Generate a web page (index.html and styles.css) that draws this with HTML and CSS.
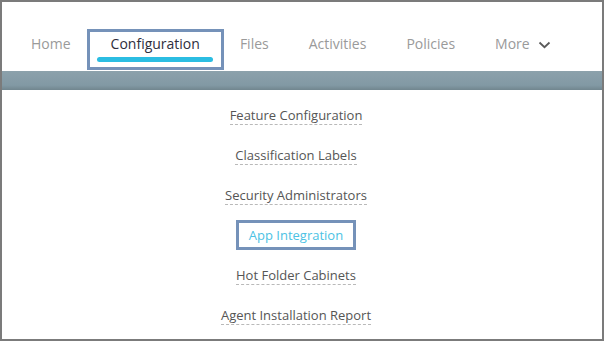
FILE: index.html
```html
<!DOCTYPE html>
<html>

<head>
    <title>Configuration</title>
    <link rel="stylesheet" href="styles.css">
</head>

<body>
    <div class="frame">
        <nav class="tabs">
            <a href="#" class="tab">Home</a>
            <a href="#" class="tab active">Configuration</a>
            <a href="#" class="tab">Files</a>
            <a href="#" class="tab">Activities</a>
            <a href="#" class="tab">Policies</a>
            <a href="#" class="tab more">More
                <svg width="13" height="8" viewBox="0 0 13 8">
                    <path d="M1.5 1.5 L6.5 6.2 L11.5 1.5" fill="none" stroke="#5a5a5a" stroke-width="1.8"/>
                </svg>
            </a>
        </nav>
        <div class="bar"></div>
        <ul class="menu">
            <li><a href="#">Feature Configuration</a></li>
            <li><a href="#">Classification Labels</a></li>
            <li><a href="#">Security Administrators</a></li>
            <li><a href="#" class="current">App Integration</a></li>
            <li><a href="#">Hot Folder Cabinets</a></li>
            <li><a href="#">Agent Installation Report</a></li>
        </ul>
    </div>
</body>

</html>
```

FILE: styles.css
```css
body {
    margin: 0;
    padding: 0;
    background: white;
    font-family: "Open Sans", sans-serif;
}

.frame {
    width: 604px;
    height: 341px;
    box-sizing: border-box;
    border: 2px solid #7b7b7b;
    background: white;
}

.tabs {
    display: flex;
    align-items: flex-end;
    height: 69px;
    box-sizing: border-box;
    padding: 0 0 4px 9px;
}

.tab {
    position: relative;
    display: flex;
    align-items: flex-start;
    height: 35px;
    box-sizing: border-box;
    padding: 2px 20px 0;
    font-size: 14px;
    line-height: 20px;
    color: #9a9a9a;
    text-decoration: none;
}

.tab.active {
    color: #2e2e3c;
}

/* selection frame sits over the tab without moving its neighbours */
.tab.active::before {
    content: "";
    position: absolute;
    left: -4px;
    right: -4px;
    top: -3px;
    bottom: -3px;
    border: 3px solid #7592b9;
}

.tab.active::after {
    content: "";
    position: absolute;
    left: 6px;
    right: 7px;
    top: 25px;
    height: 5px;
    border-radius: 3px;
    background: #2bbde2;
}

.more svg {
    margin: 7px 0 0 8px;
}

.bar {
    height: 19px;
    background: linear-gradient(#8ca1ab, #8299a4 75%, #71868f);
}

.menu {
    list-style: none;
    margin: 0;
    padding: 5px 12px 0 0;
    display: flex;
    flex-direction: column;
    align-items: center;
}

.menu li {
    height: 40px;
    display: flex;
    align-items: center;
}

.menu a {
    font-size: 13px;
    line-height: 18px;
    color: #555;
    text-decoration: none;
    border-bottom: 1px dashed #b9b9b9;
}

.menu a.current {
    color: #4cc2e4;
    border: 3px solid #7592b9;
    padding: 3px 10px;
}
```
